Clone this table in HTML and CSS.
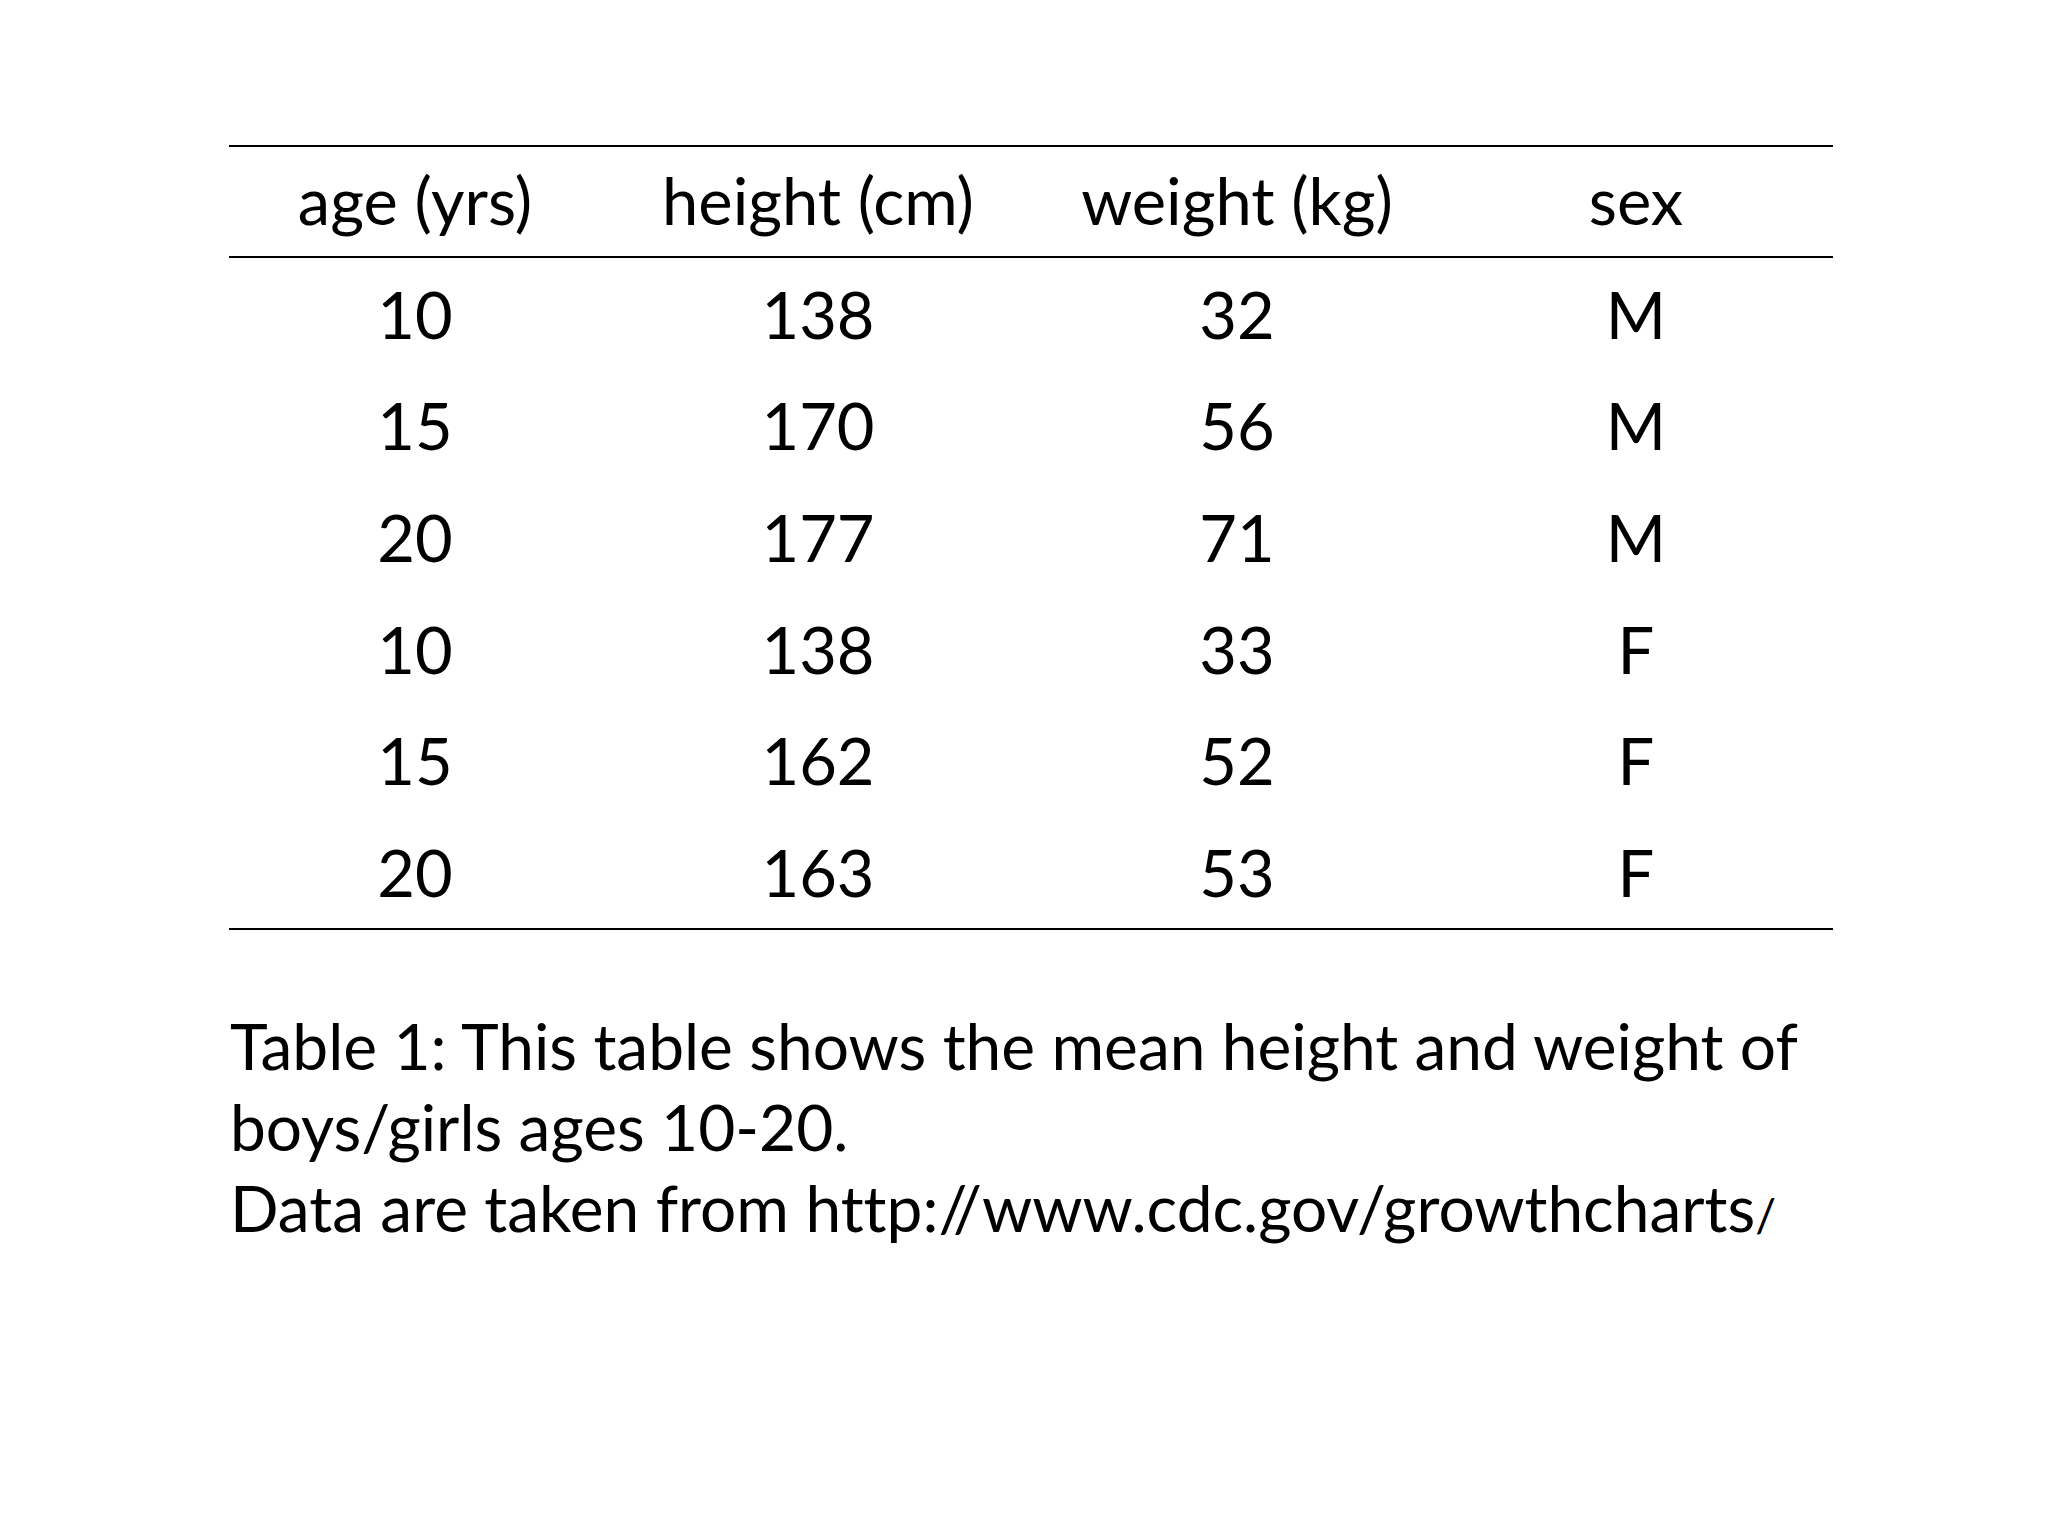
FILE: index.html
```html
<!DOCTYPE html>
<html lang="en">
<head>
<meta charset="utf-8">
<title>Table 1</title>
<link rel="stylesheet" href="styles.css">
</head>
<body>
<main class="page">
  <div class="data-table">
    <div class="row head">
      <div class="cell">age (yrs)</div>
      <div class="cell">height (cm)</div>
      <div class="cell">weight (kg)</div>
      <div class="cell">sex</div>
    </div>
    <div class="row"><div class="cell">10</div><div class="cell">138</div><div class="cell">32</div><div class="cell">M</div></div>
    <div class="row"><div class="cell">15</div><div class="cell">170</div><div class="cell">56</div><div class="cell">M</div></div>
    <div class="row"><div class="cell">20</div><div class="cell">177</div><div class="cell">71</div><div class="cell">M</div></div>
    <div class="row"><div class="cell">10</div><div class="cell">138</div><div class="cell">33</div><div class="cell">F</div></div>
    <div class="row"><div class="cell">15</div><div class="cell">162</div><div class="cell">52</div><div class="cell">F</div></div>
    <div class="row"><div class="cell">20</div><div class="cell">163</div><div class="cell">53</div><div class="cell">F</div></div>
  </div>
  <p class="caption">Table 1: This table shows the mean height and weight of<br>boys/girls ages 10-20.<br>Data are taken from http://www.cdc.gov/growthcharts<span class="small">/</span></p>
</main>
</body>
</html>
```

FILE: styles.css
```css
html, body {
  margin: 0;
  padding: 0;
  background: #ffffff;
}

.page {
  padding: 145px 0 0 229px;
  font-family: "Lato", "Open Sans", sans-serif;
  font-variant-ligatures: none;
  color: #000000;
}

.data-table {
  width: 1604px;
  border-top: 2px solid #000;
  border-bottom: 2px solid #000;
}

.row {
  display: grid;
  grid-template-columns: 372px 434px 404px 394px;
  height: 111.6px;
  align-items: center;
  font-size: 65px;
  line-height: 1.2;
  text-align: center;
}

.row.head {
  box-sizing: border-box;
  height: 111px;
  padding-bottom: 4px;
  border-bottom: 2px solid #000;
}

.caption {
  margin: 75px 0 0 1px;
  font-size: 64px;
  line-height: 81px;
}

.small {
  font-size: 46px;
}
```
